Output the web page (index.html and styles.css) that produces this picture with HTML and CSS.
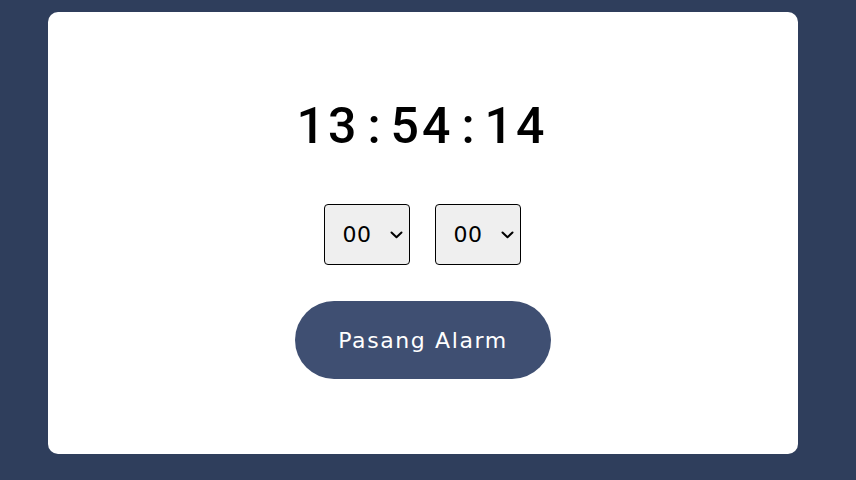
FILE: index.html
```html
<!DOCTYPE html>
<html lang="id">
<head>
<meta charset="utf-8">
<title>Alarm</title>
<link rel="stylesheet" href="styles.css">
</head>
<body>
<div class="card">
  <div class="time"><span>13</span><span class="colon">:</span><span>54</span><span class="colon">:</span><span>14</span></div>
  <div class="selects">
    <div class="sel-wrap">
      <select class="sel"><option>00</option></select>
      <svg class="chev" width="13" height="8" viewBox="0 0 13 8"><path d="M1.5 1.5 L6.5 6.2 L11.5 1.5" fill="none" stroke="#000" stroke-width="2" stroke-linecap="round" stroke-linejoin="round"/></svg>
    </div>
    <div class="sel-wrap">
      <select class="sel"><option>00</option></select>
      <svg class="chev" width="13" height="8" viewBox="0 0 13 8"><path d="M1.5 1.5 L6.5 6.2 L11.5 1.5" fill="none" stroke="#000" stroke-width="2" stroke-linecap="round" stroke-linejoin="round"/></svg>
    </div>
  </div>
  <button class="btn">Pasang Alarm</button>
</div>
</body>
</html>
```
FILE: styles.css
```css
html, body {
  margin: 0;
  padding: 0;
}
body {
  background: #2f3e5c;
  width: 856px;
  height: 480px;
  overflow: hidden;
  padding-top: 12px;
  box-sizing: border-box;
}
.card {
  margin-left: 48px;
  width: 750px;
  height: 442px;
  background: #fff;
  border-radius: 10px;
  box-sizing: border-box;
  padding-top: 81px;
  display: flex;
  flex-direction: column;
  align-items: center;
}
.time {
  font-family: Roboto, sans-serif;
  font-weight: 500;
  font-size: 50px;
  line-height: 66px;
  height: 66px;
  color: #000;
  display: flex;
  letter-spacing: 3px;
  padding-right: 2px;
}
.colon {
  margin: 0 7px 0 8px;
}
.selects {
  margin-top: 45px;
  display: flex;
  gap: 25px;
  padding-right: 2px;
}
.sel-wrap {
  position: relative;
  width: 86px;
  height: 61px;
}
.sel {
  appearance: none;
  -webkit-appearance: none;
  width: 86px;
  height: 61px;
  font-family: "DejaVu Sans", sans-serif;
  font-size: 22px;
  color: #000;
  background: #efefef;
  border: 1px solid #000;
  border-radius: 4px;
  padding: 0 0 0 18px;
  box-sizing: border-box;
  letter-spacing: 0.5px;
}
.chev {
  position: absolute;
  left: 66px;
  top: 27px;
  pointer-events: none;
}
.btn {
  margin-top: 36px;
  width: 256px;
  height: 78px;
  border: none;
  border-radius: 39px;
  background: #3f4f72;
  color: #fff;
  font-family: "DejaVu Sans", sans-serif;
  font-size: 22px;
  letter-spacing: 1.6px;
  padding: 0;
  cursor: pointer;
}
```
